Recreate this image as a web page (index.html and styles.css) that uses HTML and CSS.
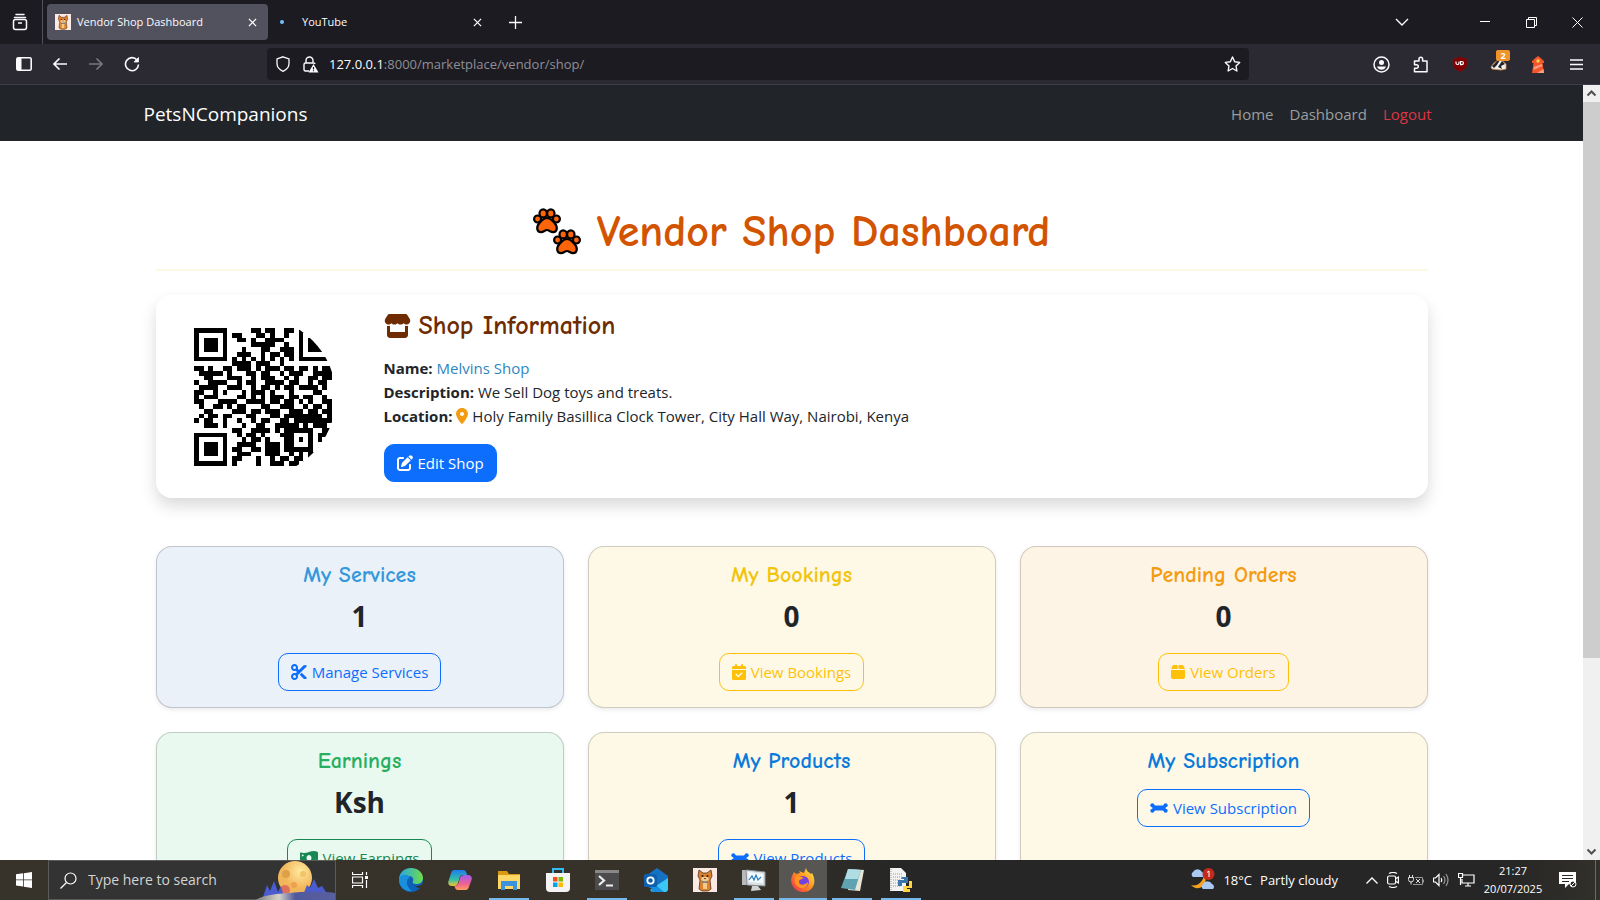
FILE: index.html
```
<!DOCTYPE html>
<html lang="en">

<head>
  <meta charset="UTF-8" />
  <meta name="viewport" content="width=device-width, initial-scale=1.0" />
  <title>Vendor Shop Dashboard</title>
  <link rel="stylesheet" href="styles.css">
</head>

<body>

  <!-- shared icons -->
  <svg class="sprite" aria-hidden="true">
    <symbol id="x" viewBox="0 0 10 10"><path d="M1 1l8 8M9 1L1 9" fill="none" stroke="currentColor" stroke-width="1.4" /></symbol>
    <symbol id="bone" viewBox="0 0 576 512">
      <g fill="currentColor"><circle cx="76" cy="170" r="66" /><circle cx="76" cy="342" r="66" /><circle cx="500" cy="170" r="66" /><circle cx="500" cy="342" r="66" /><path d="M76 150h50q20 26 50 26h224q30 0 50-26h50v212h-50q-20-26-50-26H176q-30 0-50 26H76z" /></g>
    </symbol>
    <symbol id="dog" viewBox="0 0 24 24">
      <path fill="#fbe9e4" d="M0 0h24v24H0z" />
      <path fill="#d9822f" stroke="#5d3014" stroke-width=".8" d="M6 2l4 3h4l4-3 1 6-2 4 1 9-3 2H9l-3-2 1-9-2-4z" />
      <path fill="#f7c98b" d="M9 9h6l1 3-4 2-4-2zM10 15h4v6h-4z" />
      <circle cx="9.5" cy="8" r="1" fill="#2a1608" /><circle cx="14.5" cy="8" r="1" fill="#2a1608" />
      <path fill="#2a1608" d="M11 10h2l-1 1.500z" /><path stroke="#3b7cb8" stroke-width="1" d="M9 14h6" />
    </symbol>
    <symbol id="paw" viewBox="0 0 28 26">
      <g stroke="#000" stroke-width="2.200" fill="#ff640a">
        <path d="M14 10c4 0 5 2.500 7.500 5 3.500 3.500 3 9-1.500 9.200-2.500.1-4-2.200-6-2.200s-3.500 2.300-6 2.200c-4.500-.2-5-5.700-1.500-9.200 2.500-2.500 3.500-5 7.500-5z" />
        <circle cx="4.600" cy="11" r="3.500" /><circle cx="23.400" cy="11" r="3.500" />
        <ellipse cx="10.200" cy="5.400" rx="3.700" ry="4" /><ellipse cx="17.800" cy="5.400" rx="3.700" ry="4" />
      </g>
    </symbol>
  </svg>

  <header class="browser">
    <div class="tab-bar">
      <button class="view-btn" aria-label="Firefox View">
        <svg width="16" height="18" viewBox="0 0 16 18" fill="none" stroke="#fbfbfe" stroke-width="1.500"><path d="M4 1.500h8M2.500 4.500h11" stroke-linecap="round" /><rect x="1.500" y="6.500" width="13" height="10" rx="2" /><path d="M6 10h4" /></svg>
      </button>
      <div class="tab active">
        <svg width="16" height="16"><use href="#dog" /></svg>
        <span>Vendor Shop Dashboard</span>
        <button aria-label="Close tab"><svg width="9" height="9"><use href="#x" /></svg></button>
      </div>
      <div class="tab">
        <i class="dot"></i>
        <span>YouTube</span>
        <button aria-label="Close tab"><svg width="9" height="9"><use href="#x" /></svg></button>
      </div>
      <button class="new-tab" aria-label="New tab"><svg width="13" height="13" viewBox="0 0 13 13" stroke="#fbfbfe" stroke-width="1.300"><path d="M6.500 0v13M0 6.500h13" /></svg></button>
      <div class="window-btns">
        <button aria-label="List tabs"><svg width="14" height="8" viewBox="0 0 14 8" fill="none" stroke="#fbfbfe" stroke-width="1.400"><path d="M1 1l6 6 6-6" /></svg></button>
        <button aria-label="Minimize"><svg width="10" height="10" viewBox="0 0 10 10" stroke="#fff"><path d="M0 4.500h10" /></svg></button>
        <button aria-label="Restore"><svg width="11" height="11" viewBox="0 0 11 11" fill="none" stroke="#fff"><path d="M.5 2.500h8v8h-8zM2.500 2.500v-2h8v8h-2" /></svg></button>
        <button aria-label="Close"><svg width="11" height="11" viewBox="0 0 11 11" stroke="#fff"><path d="M.5.5l10 10M10.500.5l-10 10" /></svg></button>
      </div>
    </div>

    <div class="toolbar">
      <div class="nav-btns">
        <button aria-label="Sidebar"><svg width="16" height="14" viewBox="0 0 16 14"><rect x=".8" y=".8" width="14.400" height="12.400" rx="1.500" fill="none" stroke="#fbfbfe" stroke-width="1.600" /><path fill="#fbfbfe" d="M1 1h4.500v12H1z" /></svg></button>
        <button aria-label="Back"><svg width="14" height="12" viewBox="0 0 14 12" fill="none" stroke="#fbfbfe" stroke-width="1.600"><path d="M14 6H1M6.500.5L1 6l5.500 5.500" /></svg></button>
        <button aria-label="Forward"><svg width="14" height="12" viewBox="0 0 14 12" fill="none" stroke="#77767e" stroke-width="1.600"><path d="M0 6h13M7.500.5L13 6l-5.500 5.500" /></svg></button>
        <button aria-label="Reload"><svg width="16" height="16" viewBox="0 0 16 16" fill="none" stroke="#fbfbfe" stroke-width="1.600"><path d="M13 4a6.500 6.500 0 1 0 1.500 4.500" /><path fill="#fbfbfe" d="M14.500 1.500v4.500H10z" stroke-width=".8" /></svg></button>
      </div>
      <div class="url-bar">
        <svg width="16" height="16" viewBox="0 0 16 16" fill="none" stroke="#fbfbfe" stroke-width="1.300"><path d="M8 .8l6 2.200v4.500c0 3.500-2.500 6.300-6 7.800-3.500-1.500-6-4.300-6-7.800V3z" /></svg>
        <svg width="17" height="17" viewBox="0 0 17 17" fill="none" stroke="#fbfbfe" stroke-width="1.400"><path d="M4 7V4.500a3.500 3.500 0 0 1 7 0V7M7 15H3.500A1.500 1.500 0 0 1 2 13.500v-5A1.500 1.500 0 0 1 3.500 7h8A1.500 1.500 0 0 1 13 8" /><path fill="#fbfbfe" stroke="none" d="M11.500 8l5 8.500h-10z" /><path stroke="#1c1b22" stroke-width="1.200" d="M11.500 11v2.500m0 .8v1" /></svg>
        <label for="url">127.0.0.1</label>
        <input id="url" type="text" value=":8000/marketplace/vendor/shop/">
        <button aria-label="Bookmark"><svg width="17" height="16" viewBox="0 0 17 16" fill="none" stroke="#fbfbfe" stroke-width="1.400" stroke-linejoin="round"><path d="M8.500 1l2.200 4.700 5 .7-3.700 3.500.9 5.100-4.400-2.500L4.100 15 5 9.900 1.300 6.400l5-.7z" /></svg></button>
      </div>
      <div class="ext-btns">
        <button aria-label="Account"><svg width="17" height="17" viewBox="0 0 17 17"><circle cx="8.500" cy="8.500" r="7.500" fill="none" stroke="#fbfbfe" stroke-width="1.500" /><circle cx="8.500" cy="6.500" r="2.500" fill="#fbfbfe" /><path fill="#fbfbfe" d="M4 10.500h9c-.5 2-2.500 3.300-4.500 3.300S4.500 12.500 4 10.500z" /></svg></button>
        <button aria-label="Extensions"><svg width="16" height="17" viewBox="0 0 16 17" fill="none" stroke="#fbfbfe" stroke-width="1.500" stroke-linejoin="round"><path d="M1.500 5H6V3a1.800 1.800 0 0 1 3.600 0v2H14v10.800H1.500v-3.500h2a1.800 1.800 0 0 0 0-3.600h-2z" /></svg></button>
        <button aria-label="uBlock"><svg width="16" height="16" viewBox="0 0 16 16"><path fill="#800000" stroke="#5d2029" stroke-width=".6" d="M8 .5c2 1.500 4.500 2 7 2v5c0 4-3 6.500-7 8.200-4-1.700-7-4.200-7-8.200v-5c2.500 0 5-.5 7-2z" /><path fill="none" stroke="#fff" stroke-width="1.200" d="M4 5.500V7a1.500 1.500 0 0 0 3 0V5.500M8.600 5.500h1.200a1.600 1.600 0 0 1 0 3.200H8.600z" /></svg></button>
        <button aria-label="Privacy Badger" class="badger"><svg width="17" height="13" viewBox="0 0 17 13"><path fill="#f4f1ec" stroke="#d78d4e" stroke-width=".8" d="M1 9l3-4 6-4 6 5v5l-5 1-9-1z" /><path fill="#20242b" d="M2 8l5-5 3-1-3 5-3 3zM8 9l4-6 3 3-4 2 1 3z" /></svg><b>2</b></button>
        <button aria-label="Lighthouse"><svg width="12" height="17" viewBox="0 0 12 17"><path fill="#f4562c" d="M6 0l4.500 3.500v1H12V7h-1.500L12 17H0L1.500 7H0V4.500h1.500v-1z" /><circle cx="6" cy="5" r="1.700" fill="#ffd34d" /><path fill="#ff9b80" d="M2 11l8-3 .3 2L1.500 14zM5 17l6.500-4 .5 4z" /></svg></button>
        <button aria-label="Menu"><svg width="13" height="11" viewBox="0 0 13 11" stroke="#fbfbfe" stroke-width="1.300"><path d="M0 1h13M0 5.500h13M0 10h13" /></svg></button>
      </div>
    </div>
  </header>

  <div class="viewport">
    <div class="page">
      <nav class="navbar">
        <div class="container">
          <a class="brand" href="#">PetsNCompanions</a>
          <div class="links">
            <a href="#">Home</a>
            <a href="#">Dashboard</a>
            <a href="#" class="logout">Logout</a>
          </div>
        </div>
      </nav>

      <main class="container content">
        <h1>
          <svg width="48" height="48" viewBox="0 0 48 48"><use href="#paw" x="0" y="0" width="28" height="26" /><use href="#paw" x="20" y="21" width="28" height="26" /></svg>
          Vendor Shop Dashboard
        </h1>

        <section class="shop-card">
          <div class="qr"><svg id="qr" viewBox="0 0 29 29" shape-rendering="crispEdges"></svg></div>
          <div class="shop-info">
            <h2>
              <svg width="27" height="24" viewBox="0 0 576 512" fill="currentColor"><path d="M547.6 103.8L490.3 13.1C485.2 5 476.1 0 466.4 0H109.6C99.9 0 90.8 5 85.7 13.1L28.3 103.8c-29.6 46.8-3.4 111.9 51.9 119.4c4 .5 8.1 .8 12.1 .8c26.1 0 49.3-11.4 65.2-29c15.9 17.6 39.1 29 65.2 29c26.1 0 49.3-11.4 65.2-29c15.9 17.6 39.1 29 65.2 29c26.2 0 49.3-11.4 65.2-29c16 17.6 39.1 29 65.2 29c4.1 0 8.1-.3 12.1-.8c55.5-7.4 81.8-72.5 52.1-119.4zM499.700 254.900l-.1 0c-5.300 .7-10.700 1.100-16.200 1.100c-12.400 0-24.300-1.900-35.400-5.300V384H128V250.600c-11.200 3.500-23.200 5.400-35.600 5.400c-5.500 0-11-.4-16.300-1.100l-.1 0c-4.100-.6-8.100-1.300-12-2.300V384v64c0 35.300 28.700 64 64 64H448c35.300 0 64-28.700 64-64V384 252.600c-4 1-8 1.800-12.300 2.300z" /></svg>
              Shop Information
            </h2>
            <p>
              <strong>Name:</strong> <span class="shop-name">Melvins Shop</span><br>
              <strong>Description:</strong> We Sell Dog toys and treats.<br>
              <strong>Location:</strong>
              <svg class="pin" width="12" height="16" viewBox="0 0 384 512" fill="currentColor"><path d="M215.7 499.2C267 435 384 279.4 384 192C384 86 298 0 192 0S0 86 0 192c0 87.4 117 243 168.3 307.2c12.3 15.3 35.1 15.3 47.4 0zM192 128a64 64 0 1 1 0 128 64 64 0 1 1 0-128z" /></svg>
              Holy Family Basillica Clock Tower, City Hall Way, Nairobi, Kenya
            </p>
            <a class="btn solid" href="#">
              <svg width="16" height="16" viewBox="0 0 512 512" fill="currentColor"><path d="M471.6 21.7c-21.9-21.9-57.3-21.9-79.2 0L362.3 51.7l97.9 97.9 30.1-30.1c21.9-21.9 21.9-57.3 0-79.2L471.6 21.7zm-299.2 220c-6.1 6.1-10.8 13.6-13.5 21.9l-29.6 88.8c-2.9 8.6-.6 18.1 5.8 24.6s15.9 8.7 24.6 5.8l88.8-29.6c8.2-2.7 15.7-7.4 21.9-13.5L437.7 172.3 339.7 74.3 172.4 241.7zM96 64C43 64 0 107 0 160V416c0 53 43 96 96 96H352c53 0 96-43 96-96V320c0-17.7-14.3-32-32-32s-32 14.3-32 32v96c0 17.7-14.3 32-32 32H96c-17.7 0-32-14.3-32-32V160c0-17.7 14.3-32 32-32h96c17.7 0 32-14.3 32-32s-14.3-32-32-32H96z" /></svg>
              Edit Shop</a>
          </div>
        </section>

        <section class="cards">
          <div class="card services">
            <h3>My Services</h3>
            <p>1</p>
            <a class="btn blue" href="#">
              <svg width="16" height="16" viewBox="0 0 512 512" fill="currentColor"><path d="M256 192l-39.5-39.5c4.9-12.6 7.5-26.2 7.5-40.5C224 50.1 173.9 0 112 0S0 50.1 0 112s50.1 112 112 112c14.3 0 27.9-2.7 40.5-7.5L192 256l-39.5 39.5c-12.6-4.9-26.2-7.5-40.5-7.5C50.1 288 0 338.1 0 400s50.1 112 112 112s112-50.1 112-112c0-14.3-2.7-27.9-7.5-40.5L499.2 76.8c7.1-7.1 7.1-18.5 0-25.6c-28.3-28.3-74.1-28.3-102.4 0L256 192zm22.6 150.6L396.8 460.8c28.3 28.3 74.1 28.3 102.4 0c7.1-7.1 7.1-18.5 0-25.6L342.6 278.6l-64 64zM64 112a48 48 0 1 1 96 0 48 48 0 1 1 -96 0zm48 240a48 48 0 1 1 0 96 48 48 0 1 1 0-96z" /></svg>
              Manage Services</a>
          </div>
          <div class="card bookings">
            <h3>My Bookings</h3>
            <p>0</p>
            <a class="btn yellow" href="#">
              <svg width="14" height="16" viewBox="0 0 448 512" fill="currentColor"><path d="M128 0c17.7 0 32 14.3 32 32V64H288V32c0-17.7 14.3-32 32-32s32 14.3 32 32V64h48c26.5 0 48 21.5 48 48v48H0V112C0 85.5 21.5 64 48 64H96V32c0-17.7 14.3-32 32-32zM0 192H448V464c0 26.5-21.5 48-48 48H48c-26.5 0-48-21.5-48-48V192zM329 305c9.4-9.4 9.4-24.6 0-33.9s-24.6-9.4-33.9 0l-95 95-47-47c-9.4-9.4-24.6-9.4-33.9 0s-9.4 24.6 0 33.9l64 64c9.4 9.4 24.6 9.4 33.9 0L329 305z" /></svg>
              View Bookings</a>
          </div>
          <div class="card orders">
            <h3>Pending Orders</h3>
            <p>0</p>
            <a class="btn yellow" href="#">
              <svg width="14" height="16" viewBox="0 0 448 512" fill="currentColor"><path d="M50.7 58.5L0 160H208V32H93.7C75.5 32 58.9 42.3 50.7 58.5zM240 160H448L397.3 58.5C389.1 42.3 372.5 32 354.3 32H240V160zm208 32H0V416c0 35.3 28.7 64 64 64H384c35.3 0 64-28.7 64-64V192z" /></svg>
              View Orders</a>
          </div>
          <div class="card earnings">
            <h3>Earnings</h3>
            <p>Ksh</p>
            <a class="btn green" href="#">
              <svg width="18" height="16" viewBox="0 0 576 512" fill="currentColor"><path fill-rule="evenodd" d="M0 112c0-26 20-40 44-32 100 34 170 10 244-15 80-27 160-50 250-15 24 9 38 26 38 50v300c0 26-20 40-44 32-100-34-170-10-244 15-80 27-160 50-250 15-24-9-38-26-38-50zM288 160c-44 0-80 43-80 96s36 96 80 96 80-43 80-96-36-96-80-96zM60 140v64c34 0 62-26 64-56-22 0-44-2-64-8zm456 232v-64c-34 0-62 26-64 56 22 0 44 2 64 8z" /></svg>
              View Earnings</a>
          </div>
          <div class="card products">
            <h3>My Products</h3>
            <p>1</p>
            <a class="btn blue" href="#"><svg width="18" height="16"><use href="#bone" /></svg> View Products</a>
          </div>
          <div class="card products subscription">
            <h3>My Subscription</h3>
            <a class="btn blue" href="#"><svg width="18" height="16"><use href="#bone" /></svg> View Subscription</a>
          </div>
        </section>
      </main>
    </div>

    <div class="scrollbar">
      <svg width="17" height="17" viewBox="0 0 17 17" fill="none" stroke="#505050" stroke-width="2"><path d="M4.500 10.500l4-4 4 4" /></svg>
      <div class="track"><div class="thumb"></div></div>
      <svg width="17" height="17" viewBox="0 0 17 17" fill="none" stroke="#505050" stroke-width="2"><path d="M4.500 6.500l4 4 4-4" /></svg>
    </div>
  </div>

  <footer class="taskbar">
    <button class="start" aria-label="Start"><svg width="16" height="16" viewBox="0 0 16 16" fill="#fff"><path d="M0 2.300L7 1.300v6.200H0zM7.800 1.200L16 0v7.500H7.800zM0 8.300h7v6.300l-7-1zM7.800 8.300H16V16l-8.200-1.200z" /></svg></button>
    <div class="search">
      <svg width="17" height="17" viewBox="0 0 17 17" fill="none" stroke="#fff" stroke-width="1.200"><circle cx="10.500" cy="6.500" r="5.500" /><path d="M6.500 10.500L.5 16.500" /></svg>
      <input type="text" placeholder="Type here to search" aria-label="Search">
      <svg class="moon" width="80" height="39" viewBox="0 0 80 39">
        <defs><radialGradient id="mg" cx=".65" cy=".3"><stop offset="0" stop-color="#ffeaa0" /><stop offset="1" stop-color="#f2b65a" /></radialGradient><linearGradient id="hill"><stop offset="0" stop-color="#777a7c" /><stop offset=".3" stop-color="#d5d3c8" /><stop offset=".5" stop-color="#52589c" /><stop offset="1" stop-color="#5960a0" /></linearGradient></defs>
        <circle cx="40" cy="17" r="17" fill="url(#mg)" /><circle cx="31" cy="13" r="4" fill="#dfa04a" /><circle cx="48" cy="13" r="3" fill="#f0c469" /><circle cx="39" cy="24" r="3" fill="#eda14e" /><circle cx="30" cy="29" r="5" fill="#e0705c" />
        <path fill="#4b5bd0" d="M8 36l4-12 3 6 4-10 4 11 3-6 3 11zM48 34l4-10 3 3 4-9 4 9 4-2 6 9z" />
        <path fill="url(#hill)" d="M0 39c12-6 22-6 34-7s30-2 46 0v7z" />
      </svg>
    </div>
    <div class="apps">
      <button aria-label="Task View"><svg width="16" height="16" viewBox="0 0 16 16" fill="none" stroke="#fff" stroke-width="1.200"><path d="M.5 0v2.500h10V0M.5 5h10v6H.5zM.5 16v-2.500h10V16M14.500 0v3M14.500 8v8" /><path d="M13 5.500h3" stroke-width="3" /></svg></button>
      <button aria-label="Edge"><svg width="24" height="24" viewBox="0 0 24 24"><defs><linearGradient id="eg"><stop offset="0" stop-color="#27a6e5" /><stop offset="1" stop-color="#6fdc4a" /></linearGradient></defs><circle cx="12" cy="12" r="12" fill="#0c62b8" /><path fill="url(#eg)" d="M0 12C0 4 6 0 12 0s12 4 12 10c0 4-3 6-7 6-3 0-4-1-3-3 1-3-1-5-5-5-5 0-8 2-9 4z" /><path fill="#1a8fdc" d="M1 9c3-3 8-3 10 0-4 2-5 9 2 14C6 24 0 19 0 12z" /><path fill="#36322a" d="M12 11c-1 5 5 9 10 6l2-1v3l-1 1c-2 0-5 0-7-2-3-2-5-4-4-7z" /></svg></button>
      <button aria-label="Copilot"><svg width="24" height="24" viewBox="0 0 24 24"><defs><linearGradient id="cp1" y2="1" x2="0"><stop offset="0" stop-color="#1d7df0" /><stop offset=".6" stop-color="#35bfa5" /><stop offset="1" stop-color="#f5c52c" /></linearGradient><linearGradient id="cp2" y2="1" x2="0"><stop offset="0" stop-color="#a45cf0" /><stop offset=".6" stop-color="#f06090" /><stop offset="1" stop-color="#ffa05c" /></linearGradient></defs><path fill="url(#cp1)" d="M7 2h8c2 0 3 1 3.500 3l.5 2h-4c-2 0-3 1-3.500 3L10 15c-.5 2-1.500 3-3.500 3H4c-3 0-4.500-2-3.500-5l3-9C4 2.500 5 2 7 2z" /><path fill="url(#cp2)" d="M17 7h3c3 0 4.500 2 3.500 5l-3 8c-.5 1.500-2 2-3.500 2h-7c-2 0-3-1.500-3.500-4 2 0 3.500-1 4-3l1.500-5C12.500 8 14 7 17 7z" /></svg></button>
      <button class="open" aria-label="File Explorer"><svg width="22" height="20" viewBox="0 0 22 20"><path fill="#d99a11" d="M0 1h9l2 3h11v5H0z" /><path fill="#ffd766" d="M0 5h22v14H0z" /><path fill="#3b93dd" d="M3 11h16v9h-4v-4H7v4H3z" /></svg></button>
      <button aria-label="Store"><svg width="24" height="24" viewBox="0 0 24 24"><path fill="none" stroke="#35bdf2" stroke-width="2" d="M7 6V1h10v5" /><path fill="#f4f4f4" d="M0 5h24v15q0 4-4 4H4q-4 0-4-4z" /><path fill="#f25022" d="M7 9h4.500v4.500H7z" /><path fill="#7fba00" d="M12.500 9H17v4.500h-4.500z" /><path fill="#00a4ef" d="M7 14.500h4.500V19H7z" /><path fill="#ffb900" d="M12.500 14.500H17V19h-4.500z" /></svg></button>
      <button class="open" aria-label="Terminal"><svg width="24" height="20" viewBox="0 0 24 20"><path fill="#4c4c4f" d="M0 0h24v20H0z" /><path fill="#888" d="M0 0h24v3H0z" /><path fill="none" stroke="#eee" stroke-width="2.200" d="M4 6l5 4.500L4 15M11 15.500h7" /></svg></button>
      <button aria-label="Outlook"><svg width="24" height="24" viewBox="0 0 24 24"><path fill="#1471c4" d="M3 7l10-7 11 8v12H5z" /><path fill="#3cc8f4" d="M6 22l18-12v11q0 3-3 3H8z" /><path fill="#1890df" d="M6 12l14 12H8z" /><rect y="6" width="13" height="13" rx="1.500" fill="#0f5faf" /><circle cx="6.500" cy="12.500" r="3.200" fill="none" stroke="#fff" stroke-width="1.800" /></svg></button>
      <button aria-label="PetsNCompanions"><svg width="24" height="24"><use href="#dog" /></svg></button>
      <button class="open" aria-label="Monitor"><svg width="24" height="24" viewBox="0 0 24 24"><path fill="#b7b9ba" d="M0 2h8v15H0z" /><path fill="#dbe2e5" stroke="#8b9194" d="M4 2l19 2v14L5 17z" /><path fill="#f4fafc" d="M6 4l15 2v9L7 14z" /><path fill="none" stroke="#287dbd" stroke-width="1.200" d="M7 12l3-4 2 4 2-5 2 5 3-3" /><path fill="#d0d2d3" d="M10 18h6l3 4-10 1z" /></svg></button>
      <button class="open current" aria-label="Firefox"><svg width="24" height="24" viewBox="0 0 24 24"><defs><linearGradient id="ff" x1="1" y1="0" x2="0" y2="1"><stop offset="0" stop-color="#fff04a" /><stop offset=".5" stop-color="#ff8c1e" /><stop offset="1" stop-color="#f2215b" /></linearGradient></defs><path fill="url(#ff)" d="M3 4l2 2 4-1-1-2 5 2 2-5c1 4 3 4 5 6l1-1c5 8 2 19-9 19C3 24-2 15 1 8z" /><circle cx="12" cy="14" r="6" fill="#7540e0" /><path fill="#ff951f" d="M4 9c4-2 7 0 9 1-3 2-5 1-5 4s5 4 9 0c0 5-4 7-7 6-6-2-7-6-6-11z" /></svg></button>
      <button class="open" aria-label="Notepad"><svg width="23" height="24" viewBox="0 0 23 24"><path fill="#e8e4d6" d="M8 1l15 1-4 21-12-1z" /><path fill="#5fa3b3" d="M7 1l13 1-6 20-14-2z" /><path fill="#b0dde4" d="M7 1l13 1-3 9L4 11z" /></svg></button>
      <button class="open" aria-label="Python"><svg width="24" height="25" viewBox="0 0 24 25"><path fill="#f3f3f3" d="M1 0h11l5 5v18H1z" /><path stroke="#999" stroke-dasharray="1 1" d="M2 1v21M4 6h10M4 9h10M4 12h7M4 15h7M4 18h7" /><path fill="#3876ab" d="M13 9h6v6h-6v3h-4v-6h6v-1h-3z" /><path fill="#ffd540" d="M20 13h3v7h-5v1h3v3h-7v-6h6z" /></svg></button>
    </div>
    <div class="tray">
      <button class="weather">
        <svg width="25" height="24" viewBox="0 0 25 24"><path fill="#f6a21c" d="M14 7a8 8 0 1 1-13 10c6 2 12-3 13-10z" /><path fill="#a9c9f3" d="M3 9a3 3 0 0 1 0-5 5 5 0 0 1 9 0 3 3 0 0 1 1 5zM13 21a3 3 0 0 1 0-5 5 5 0 0 1 9 0 3 3 0 0 1 1 5z" /><circle cx="18.500" cy="6" r="6" fill="#c42b1c" /><path fill="none" stroke="#fff" d="M17 4.500l2-1.500v6" /></svg>
        <span>18°C</span><span>Partly cloudy</span>
      </button>
      <div class="sys">
        <svg width="12" height="7" viewBox="0 0 12 7" fill="none" stroke="#fff" stroke-width="1.300"><path d="M.5 6.500L6 1l5.500 5.500" /></svg>
        <svg width="12" height="16" viewBox="0 0 12 16" fill="none" stroke="#fff" stroke-width="1.200"><rect x=".6" y="4" width="8" height="8" rx="1.500" /><path d="M9 6.500l2.400-1.500v6L9 9.500M2 1.500q4-2 8 0M2 14.500q4 2 8 0" /></svg>
        <svg width="16" height="12" viewBox="0 0 16 12" fill="none" stroke="#ddd"><path d="M.5 3.500h5v2a2.500 2.500 0 0 1-5 0zM1.500 1v2.500M4.500 1v2.500M3 8v2.500" /><path stroke="#999" d="M7 3.500h7.500v7H5M15.500 5.500v3" /><path d="M8 5l4 4M12 5l-4 4" /></svg>
        <svg width="16" height="14" viewBox="0 0 16 14" fill="none" stroke="#fff" stroke-width="1.200"><path d="M.5 5v4h2L6 12.500v-11L2.500 5zM8 5q1.500 2 0 4" /><path stroke="#999" d="M10.500 3q3 4 0 8M13 1q4 6 0 12" /></svg>
        <svg width="17" height="14" viewBox="0 0 17 14" fill="none" stroke="#fff" stroke-width="1.200"><path d="M5 2h11v8H4V6M7 13h6M10 10v3M.5.5h4v4h-4zM2.500 4.500V12" /></svg>
      </div>
      <div class="clock"><span>21:27</span><span>20/07/2025</span></div>
      <svg width="18" height="17" viewBox="0 0 18 17"><path fill="#fff" d="M0 0h17v12h-7l-4 4v-4H0z" /><path stroke="#292929" d="M3 3.500h11M3 6.500h11M3 9.500h7" /><circle cx="14" cy="12" r="3" fill="#292929" stroke="#fff" /><path stroke="#fff" d="M12 14l4-4" /></svg>
    </div>
  </footer>

  <script>
    const rows = [
      '11111110000011011001101111111',
      '10000010110001101001001000001',
      '10111010011010011110001011101',
      '10111010000011111001001011101',
      '10111010001000110011101011101',
      '10000010011100101101101000001',
      '11111110101010101010101111111',
      '00000000111101110010000000000',
      '11010011011101011101101101011',
      '01111101000110110010111001111',
      '00110001110010111001010011011',
      '10011110010110011110110010110',
      '01111001110010110101101111010',
      '11001010001011101000100001100',
      '10111000011010101110110110010',
      '11000111100111101101101010011',
      '01001101011000110011100101101',
      '00110000111011011100111011011',
      '01011011000110001101111111101',
      '10110010010010110011011111111',
      '00111010001001100111110101110',
      '00000000110011110101111110011',
      '11111110010110100011100010110',
      '10000010001011010001101010101',
      '10111010011110011101100010011',
      '10111010110011011101111110110',
      '10111010011100011100101011001',
      '10000010110001001011011010010',
      '11111110100001001110110110101'
    ];
    let d = '';
    rows.forEach((row, y) => {
      [...row].forEach((c, x) => {
        if (c === '1') d += `M${x} ${y}h1v1h-1z`;
      });
    });
    document.getElementById('qr').innerHTML = `<path d="${d}"/>`;
  </script>

</body>

</html>
```
FILE: styles.css
```
* {
  margin: 0;
  padding: 0;
  box-sizing: border-box;
}

body {
  font-family: 'Open Sans', sans-serif;
  font-size: 15px;
  line-height: 24px;
  color: #212529;
  background: #fff;
  height: 100vh;
  display: flex;
  flex-direction: column;
  overflow: hidden;
}

a {
  text-decoration: none;
}

button,
input {
  font: inherit;
  color: inherit;
  background: none;
  border: none;
  outline: none;
}

svg {
  flex-shrink: 0;
}

.sprite {
  position: absolute;
  width: 0;
  height: 0;
}

/* Browser */
.browser {
  color: #fbfbfe;
  border-bottom: 1px solid #3f3e46;
}

.browser button,
.taskbar button {
  display: flex;
  align-items: center;
  justify-content: center;
}

.tab-bar {
  height: 44px;
  background: #1c1b22;
  display: flex;
  align-items: center;
  font-size: 11px;
}

.view-btn {
  width: 43px;
  height: 44px;
  padding-right: 3px;
  border-right: 1px solid #52525e;
  margin-right: 4px;
}

.tab {
  width: 221px;
  height: 36px;
  padding: 0 8px;
  display: flex;
  align-items: center;
  gap: 6px;
  border-radius: 4px;
  margin-right: 4px;
}

.tab.active {
  background: #52525e;
}

.tab span {
  flex: 1;
}

.tab button {
  width: 16px;
  height: 16px;
}

.dot {
  width: 4px;
  height: 4px;
  border-radius: 50%;
  background: #75bfff;
  margin-right: 12px;
}

.new-tab {
  width: 36px;
  height: 36px;
}

.window-btns {
  margin-left: auto;
  display: flex;
}

.window-btns button {
  width: 46px;
  height: 44px;
}

.window-btns button:first-child {
  margin-right: 37px;
}

.toolbar {
  height: 40px;
  background: #2b2a33;
  display: flex;
  align-items: center;
}

.nav-btns {
  display: flex;
  width: 267px;
  padding-left: 6px;
}

.nav-btns button {
  width: 36px;
  height: 36px;
}

.url-bar {
  flex: 1;
  height: 32px;
  background: #1c1b22;
  border-radius: 4px;
  display: flex;
  align-items: center;
  padding: 0 8px;
  font-size: 13px;
}

.url-bar svg + svg {
  margin: 0 10px 0 11px;
}

.url-bar input {
  flex: 1;
  color: #8f8f96;
}

.ext-btns {
  width: 351px;
  display: flex;
  justify-content: flex-end;
  padding-right: 4px;
}

.ext-btns button {
  width: 39px;
  height: 36px;
}

.badger {
  position: relative;
}

.badger b {
  position: absolute;
  top: 4px;
  right: 8px;
  width: 14px;
  height: 11px;
  border-radius: 2px;
  background: #f0932b;
  font-size: 9px;
  line-height: 11px;
}

/* Page */
.viewport {
  flex: 1;
  min-height: 0;
  display: flex;
}

.page {
  flex: 1;
  overflow: hidden;
}

.container {
  max-width: 1320px;
  margin: 0 auto;
  padding: 0 12px;
}

.navbar {
  background: #212529;
}

.navbar .container {
  height: 56px;
  padding-top: 2px;
  display: flex;
  align-items: center;
  justify-content: space-between;
}

.brand {
  color: #fff;
  font-size: 19px;
}

.links {
  display: flex;
  gap: 16px;
  padding-right: 8px;
}

.links a {
  color: #9b9d9f;
}

.links .logout {
  color: #dc3545;
}

.content {
  padding: 48px 24px 0;
}

h1,
h2,
h3 {
  font-family: 'Comic Sans MS', 'Comic Neue', Lato, sans-serif;
  font-weight: 700;
}

h1 {
  display: flex;
  align-items: center;
  justify-content: center;
  gap: 16px;
  height: 82px;
  padding-top: 6px;
  border-bottom: 2px solid #fdf8e1;
  margin-bottom: 24px;
  font-size: 44px;
  color: #d35400;
}

.shop-card {
  display: flex;
  padding: 16px;
  border-radius: 16px;
  box-shadow: 0 8px 16px rgba(0, 0, 0, 0.15);
  margin-bottom: 48px;
}

.qr {
  width: 160px;
  height: 160px;
  margin: 6px 48px 0 4px;
  padding: 11px 4px 11px 18px;
  border-radius: 0 80px 80px 0;
  overflow: hidden;
}

.qr svg {
  display: block;
  width: 138px;
  height: 138px;
}

h2 {
  display: flex;
  align-items: center;
  gap: 8px;
  height: 29px;
  margin-bottom: 16px;
  font-size: 26px;
  color: #6e2c00;
}

.shop-info p {
  margin-bottom: 16px;
}

.shop-name {
  color: #2e86c1;
}

.pin {
  color: #f39c12;
  vertical-align: -2px;
}

.btn {
  display: inline-flex;
  align-items: center;
  gap: 5px;
  height: 38px;
  padding: 0 12px;
  border: 1px solid;
  border-radius: 10px;
}

.solid {
  color: #fff;
  background: #0d6efd;
  border-color: #0d6efd;
}

.blue {
  color: #0d6efd;
}

.yellow {
  color: #ffc107;
}

.green {
  color: #198754;
}

.cards {
  display: grid;
  grid-template-columns: repeat(3, 1fr);
  gap: 24px;
}

.card {
  height: 162px;
  padding: 16px;
  text-align: center;
  border: 1px solid rgba(0, 0, 0, 0.18);
  border-radius: 16px;
  box-shadow: 0 2px 4px rgba(0, 0, 0, 0.08);
}

.card h3 {
  font-size: 22px;
  margin-bottom: 8px;
}

.card p {
  font-size: 28px;
  font-weight: 700;
  line-height: 42px;
  margin-bottom: 16px;
}

.services {
  background: #eaf1f8;
}

.services h3 {
  color: #3498db;
}

.bookings {
  background: #fef9e7;
}

.bookings h3 {
  color: #f1c40f;
}

.orders {
  background: #fef4e6;
}

.orders h3 {
  color: #f39c12;
}

.earnings {
  background: #e9f9ef;
}

.earnings h3 {
  color: #27ae60;
}

.products {
  background: #fef9e7;
}

.products h3 {
  color: #0b7bdb;
}

.card.subscription h3 {
  margin-bottom: 16px;
}

.scrollbar {
  width: 17px;
  background: #f0f0f0;
  display: flex;
  flex-direction: column;
}

.track {
  flex: 1;
}

.thumb {
  height: 75%;
  background: #cdcdcd;
}

/* Taskbar */
.taskbar {
  height: 40px;
  display: flex;
  align-items: center;
  color: #fff;
  background: linear-gradient(90deg, #37322a 0%, #36322a 48%, #262626 56%, #262626 94%, #32302a 100%);
}

.start {
  width: 48px;
  height: 40px;
}

.search {
  width: 288px;
  height: 40px;
  display: flex;
  align-items: center;
  gap: 11px;
  padding-left: 11px;
  background: #333;
  border: 1px solid #5c5a58;
}

.search input {
  flex: 1;
  min-width: 0;
  font-size: 14px;
}

.search input::placeholder {
  color: #d4d4d4;
}

.apps {
  display: flex;
  gap: 1px;
}

.apps button {
  width: 48px;
  height: 40px;
}

.apps button:first-child {
  margin-right: 2px;
}

.apps .open {
  background: linear-gradient(#76b9ed, #76b9ed) center bottom / 40px 2px no-repeat;
}

.apps .current {
  background: linear-gradient(#76b9ed, #76b9ed) center bottom / 48px 2px no-repeat #585653;
}

.tray {
  margin-left: auto;
  margin-right: 4px;
  padding-right: 18px;
  height: 40px;
  border-right: 1px solid #6d6b68;
  display: flex;
  align-items: center;
  gap: 8px;
}

.weather {
  gap: 8px;
  margin-right: 20px;
  font-size: 13px;
}

.sys {
  display: flex;
  align-items: center;
  gap: 9px;
}

.clock {
  width: 60px;
  margin-right: 8px;
  display: flex;
  flex-direction: column;
  align-items: center;
  font-size: 11px;
  line-height: 18px;
}
```
